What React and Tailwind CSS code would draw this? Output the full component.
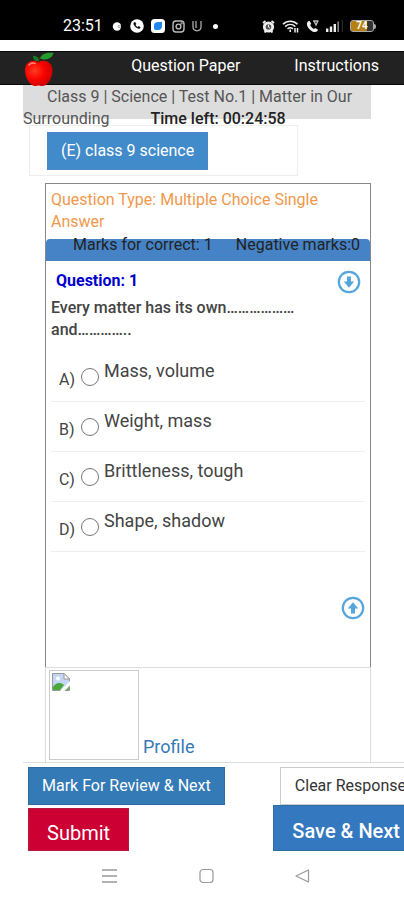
import React, { useState } from "react";

const options = [
  { key: "A", text: "Mass, volume" },
  { key: "B", text: "Weight, mass" },
  { key: "C", text: "Brittleness, tough" },
  { key: "D", text: "Shape, shadow" },
];

export default function App() {
  return (
    <div className="min-h-screen flex flex-col bg-white font-['Roboto',sans-serif] text-base leading-[22px] text-[#444] overflow-x-hidden">
      <StatusBar />
      <Navbar />
      <main className="pl-[23px] pr-[33px]">
        <TestTitle />
        <section className="ml-[6px] mr-[73px] mt-[6px] h-[51px] border border-[#eee] px-[17px] pt-[6px]">
          <button
            type="button"
            className="h-[38px] bg-[#428bca] border border-[#4a86c8] px-[13px] text-white"
          >
            (E) class 9 science
          </button>
        </section>
        <QuestionPanel />
        <Profile />
      </main>
      <Actions />
      <SystemNav />
    </div>
  );
}

function StatusBar() {
  return (
    <div className="h-10 shrink-0 bg-black text-white flex items-center justify-between pt-3 pl-[63px] pr-[28px]">
      <div className="flex items-center gap-[7px]">
        <span className="w-[42px] text-base">23:51</span>
        <svg width="11" height="11" viewBox="0 0 11 11">
          <circle cx="5" cy="5.5" r="4.2" fill="#fff" />
          <path d="M6 5.5H11" stroke="#000" strokeWidth="1.6" />
          <path d="M5 5.5H9" stroke="#ddd" strokeWidth="1" />
        </svg>
        <svg width="14" height="14" viewBox="0 0 14 14">
          <circle cx="7" cy="7" r="6.8" fill="#fff" />
          <path
            d="M4 3.2c-.9.8-.7 2.5 1 4.4 1.8 1.9 3.7 2.6 4.900 1.8l.7-1-1.8-1.3-1.1.8C6.8 7.600 6 6.800 5.600 6l.7-1L5.200 3z"
            fill="#111"
          />
        </svg>
        <svg width="14" height="14" viewBox="0 0 14 14">
          <rect width="14" height="14" rx="3.5" fill="#fff" />
          <path
            d="M3 6.5c0-2.500 1.500-3.500 4-3.500h4v4c0 2.800-1.500 4-4 4H5c-1.300 0-2-.7-2-2z"
            fill="#1e88f0"
          />
        </svg>
        <svg width="13" height="13" viewBox="0 0 13 13" fill="none" stroke="#bbb" strokeWidth="1.4">
          <rect x="1" y="1" width="11" height="11" rx="3" />
          <circle cx="6.5" cy="6.5" r="2.4" />
          <circle cx="9.6" cy="3.4" r=".4" />
        </svg>
        <svg width="10" height="12" viewBox="0 0 10 12" fill="none" stroke="#aaa" strokeWidth="1.3">
          <path d="M1 1v6c0 2 1.200 3.500 4 3.800C7.800 10.500 9 9 9 7V1M4 1v7" />
        </svg>
        <span className="ml-1 size-[5px] rounded-full bg-white" />
      </div>

      <div className="flex items-center gap-[7px]">
        <svg width="13" height="13" viewBox="0 0 13 13">
          <circle cx="6.5" cy="7" r="4.2" fill="#555" stroke="#eee" strokeWidth="2.8" />
          <path d="M1 3l2.500-2M12 3L9.500 1M2.500 12.500l1.500-1.500M10.500 12.500L9 11" stroke="#eee" strokeWidth="1.8" />
          <path d="M6.500 4.800V7.200l1.500.8" fill="none" stroke="#eee" />
        </svg>
        <svg width="17" height="13" viewBox="0 0 17 13" fill="none" stroke="#eee" strokeWidth="1.5">
          <path d="M1 4.200C5 .3 11.500.3 15.500 4.200M3.200 6.600c3-2.700 7.100-2.700 10.100 0M5.500 8.800c1.700-1.400 3.800-1.400 5.500 0" />
          <path d="M8.200 9.500v2.500M13 8v4.500M15.500 8v4.500" />
        </svg>
        <svg width="13" height="13" viewBox="0 0 13 13">
          <path
            d="M2.500 1C0 2.500.6 6 3.200 8.900 6 12 9.400 13 11.500 11L12 9.800 9.300 8 8 9C6.300 8.300 4.800 6.600 4.200 5l1-1.300L3.700 1z"
            fill="#eee"
          />
          <path d="M7 1h5.500M8 1l2 4 2-4" fill="none" stroke="#bbb" strokeWidth="1.4" />
        </svg>
        <svg width="17" height="12" viewBox="0 0 17 12">
          <path d="M0 8.500h2.400V12H0zM3.800 6.500h2.400V12H3.800zM7.600 4h2.400v8H7.600z" fill="#eee" />
          <path d="M11.400 1.500h1.600V12h-1.600z" fill="#888" />
          <path d="M15.800 0h1v12h-1z" fill="#333" />
        </svg>
        <span className="flex items-center">
          <span className="w-[24px] h-[12px] rounded-[3px] border border-[#aaa] bg-linear-to-r from-[#b58212] from-70% to-[#333] to-75% text-[10px] leading-[10px] text-center font-bold">
            74
          </span>
          <span className="w-[2px] h-[5px] rounded-r bg-[#aaa]" />
        </span>
      </div>
    </div>
  );
}

function Navbar() {
  return (
    <nav className="mt-[11px] h-[34px] shrink-0 bg-[#222] border-y border-[#080808] flex items-center justify-between pl-[23px] pr-[25px] relative">
      <a href="#home" aria-label="Home" className="self-start">
        <svg width="32" height="36" viewBox="0 0 32 36">
          <defs>
            <radialGradient id="apple" cx="35%" cy="40%" r="70%">
              <stop offset="0" stopColor="#ff3a22" />
              <stop offset=".5" stopColor="#fa0400" />
              <stop offset="1" stopColor="#c90000" />
            </radialGradient>
          </defs>
          <path
            d="M15 10C9 6.500 2 10 2 18c0 8 5 16 10.500 16 1.500 0 2-.5 3-.5s1.800.5 3.500.5C25 34 29.500 26 29.500 18 29.500 10 22 6.500 15 10z"
            fill="url(#apple)"
          />
          <path d="M15.500 10.500C15 7.500 17 5.500 19 4" stroke="#4a2a12" strokeWidth="1.5" fill="none" />
          <path d="M17 6.500C19 1.500 24.500.3 30.500 1 29.500 6 23.500 9 17 6.500z" fill="#259b2e" />
          <path d="M16 9C11.500 9.500 10 7 10 3.500 14 4 16 6 16 9z" fill="#167b24" />
          <path d="M6 13c2-2.500 4-2.500 6-1.500" stroke="#ff8b7a" strokeWidth="1.5" fill="none" strokeLinecap="round" />
        </svg>
      </a>
      <div className="flex gap-[54px] text-white pb-[5px]">
        <a href="#paper">Question Paper</a>
        <a href="#instructions">Instructions</a>
      </div>
    </nav>
  );
}

function TestTitle() {
  return (
    <h1 className="h-[34px] pt-px bg-[#ddd] indent-[24px] text-[#555]">
      Class 9 | Science | Test No.1 | Matter in Our Surrounding
      <strong className="ml-[41px] font-medium text-[#222]">Time left: 00:24:58</strong>
    </h1>
  );
}

function QuestionPanel() {
  const [answer, setAnswer] = useState(null);

  return (
    <section className="ml-[22px] mt-[7px] h-[484px] flex flex-col border border-b-0 border-[#888]">
      <h2 className="px-[5px] pt-[5px] text-[#f0984c]">
        Question Type: Multiple Choice Single Answer
      </h2>
      <div className="mt-[6px] h-[22px] shrink-0 rounded-t bg-[#4682c6] flex justify-between pl-[27px] pr-[10px] leading-[12px] text-[#222]">
        <span>Marks for correct: 1</span>
        <span>Negative marks:0</span>
      </div>

      <div className="flex items-start justify-between pl-[10px] pr-[9px] pt-[9px]">
        <h3 className="font-bold text-[#0000cc]">Question: 1</h3>
        <ArrowButton label="Scroll down" />
      </div>
      <p className="px-[5px] pt-[3px] font-medium">
        Every matter has its own………………
        <br />
        and…………..
      </p>

      <ul className="mx-[5px] mt-[11px]">
        {options.map((o) => (
          <li key={o.key} className="h-[50px] border-b border-[#eee]">
            <label className="flex h-full pl-[8px]">
              <span className="pt-[17px] w-[22px]">{o.key})</span>
              <input
                type="radio"
                name="answer"
                value={o.key}
                checked={answer === o.key}
                onChange={() => setAnswer(o.key)}
                className="appearance-none mt-[16px] size-[18px] shrink-0 rounded-full border border-[#777] checked:border-[6px] checked:border-[#428bca]"
              />
              <span className="pl-[5px] pt-[8px] text-lg leading-[22px]">{o.text}</span>
            </label>
          </li>
        ))}
      </ul>

      <div className="mt-auto flex justify-end pr-[5px] pb-[47px]">
        <ArrowButton label="Scroll up" up />
      </div>
    </section>
  );
}

function ArrowButton({ label, up }) {
  return (
    <button type="button" aria-label={label}>
      <svg
        width="24"
        height="24"
        viewBox="0 0 24 24"
        className={up ? "rotate-180" : ""}
      >
        <circle cx="12" cy="12" r="10.2" fill="none" stroke="#56a5dc" strokeWidth="2.2" />
        <path d="M10 6.500h4v5h3.200L12 17.800l-5.200-6.300H10z" fill="#56a5dc" />
      </svg>
    </button>
  );
}

function Profile() {
  return (
    <section className="ml-[22px] h-[95px] flex items-end gap-1 border border-b-0 border-[#ddd] pl-[3px] pb-[2px]">
      <div className="size-[90px] border border-[#ccc] p-[2px]">
        <svg width="18" height="18" viewBox="0 0 18 18" role="img" aria-label="Profile photo">
          <path d="M.5.500H12L17.500 6v11.500H.5z" fill="#c5d6f5" stroke="#999" />
          <path d="M12 .5V6h5.500z" fill="#fff" stroke="#999" />
          <circle cx="6" cy="5.5" r="2" fill="#fff" />
          <path d="M1 17v-3c3-4.500 7-5 11-2l-4 5z" fill="#4aa83a" />
          <path d="M7.500 18.500L18.500 7.500v4.500L12 18.500z" fill="#fff" />
          <path d="M13 17.500h4.500V13z" fill="#72a968" />
        </svg>
      </div>
      <a href="#profile" className="pb-[2px] text-lg leading-[22px] text-[#337ab7]">
        Profile
      </a>
    </section>
  );
}

function Actions() {
  return (
    <footer className="ml-[23px] border-t border-[#ddd] pl-[5px] pt-[4px]">
      <div className="flex justify-between">
        <button
          type="button"
          className="h-[38px] px-[13px] bg-[#337ab7] border border-[#2e6da4] text-white whitespace-nowrap"
        >
          Mark For Review &amp; Next
        </button>
        <button
          type="button"
          className="-mr-[2px] h-[38px] pl-[14px] bg-white border border-r-0 border-[#ccc] text-[#333] whitespace-nowrap"
        >
          Clear Response
        </button>
      </div>
      <div className="flex items-end justify-between">
        <button
          type="button"
          className="h-[43px] px-[18px] pt-[6px] bg-[#cc0033] border border-[#b21840] text-xl text-white"
        >
          Submit
        </button>
        <button
          type="button"
          className="h-[46px] pl-[18px] pr-[4px] pt-[6px] bg-[#3478c0] border border-r-0 border-[#2e6da4] text-xl font-medium text-white whitespace-nowrap"
        >
          Save &amp; Next
        </button>
      </div>
    </footer>
  );
}

function SystemNav() {
  return (
    <div className="flex items-center justify-between pt-[17px] pl-[102px] pr-[94px] text-[#999]">
      <button type="button" aria-label="Recent apps">
        <svg width="15" height="16" viewBox="0 0 15 16" fill="none" stroke="currentColor" strokeWidth="1.4">
          <path d="M0 2h15M0 8h15M0 14h15" />
        </svg>
      </button>
      <button type="button" aria-label="Home screen">
        <svg width="15" height="16" viewBox="0 0 15 16" fill="none" stroke="currentColor" strokeWidth="1.2">
          <rect x="1" y="1.5" width="13" height="13" rx="3" />
        </svg>
      </button>
      <button type="button" aria-label="Back">
        <svg width="15" height="16" viewBox="0 0 15 16" fill="none" stroke="currentColor" strokeWidth="1.2">
          <path d="M13.500 2v12L1 8z" strokeLinejoin="round" />
        </svg>
      </button>
    </div>
  );
}
